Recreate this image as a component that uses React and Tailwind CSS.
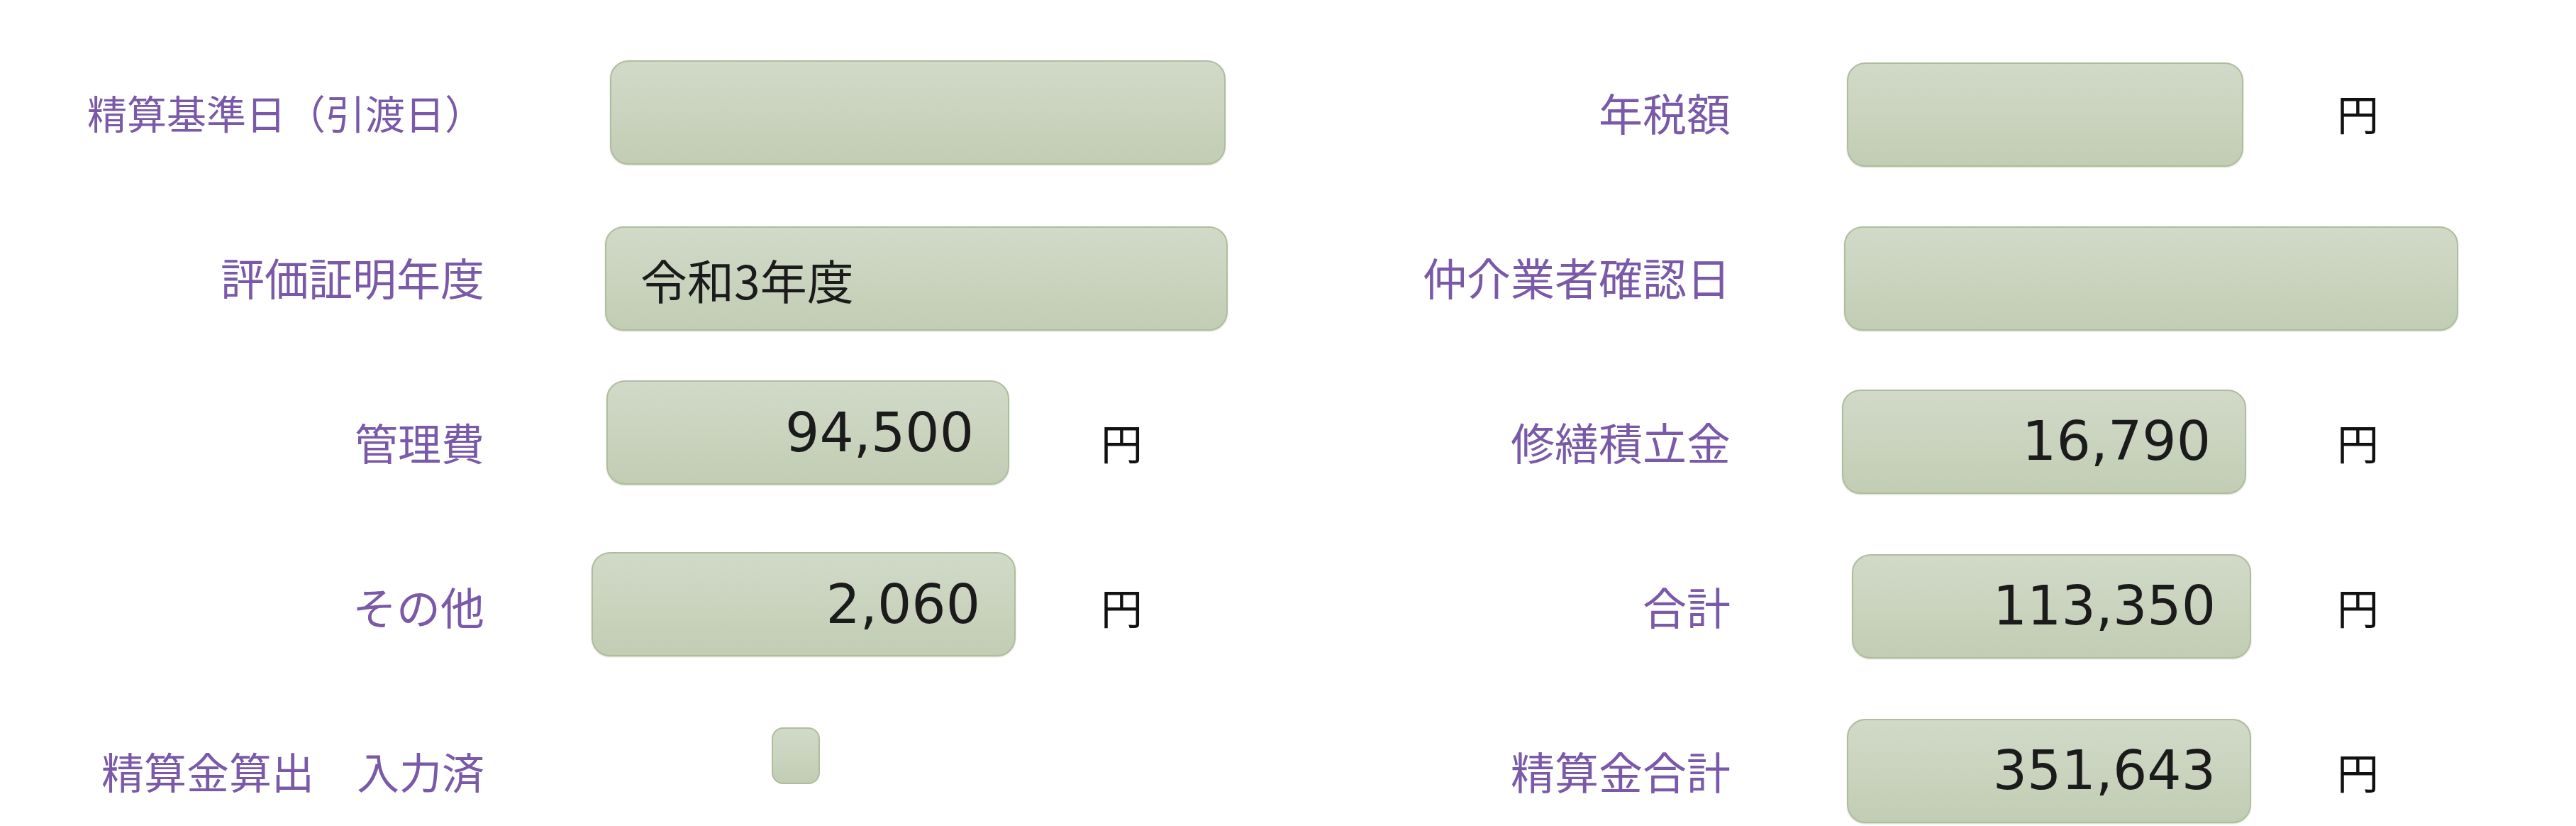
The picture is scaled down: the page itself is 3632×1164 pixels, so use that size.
import React from 'react';

const LABEL_FONT = { fontFamily: '"Noto Sans CJK JP", "Noto Sans", sans-serif' };

// ─── 入力欄 ──────
const Field = ({ value = '', align = 'right', className = '' }) => (
  <div
    className={`h-[147px] shrink-0 flex items-center rounded-[26px] border-2 border-[#aebd9f] bg-gradient-to-b from-[#d1dac8] to-[#c2cdb4] shadow-[0_1px_2px_rgba(120,140,100,0.35)] ${
      align === 'right' ? 'justify-end pr-[48px]' : 'justify-start pl-[48px]'
    } ${className}`}
  >
    {align === 'right' ? (
      <span className="text-[76px] leading-none text-[#1b1b1b]" style={{ fontFamily: '"DejaVu Sans", sans-serif' }}>
        {value}
      </span>
    ) : (
      <span className="text-[66px] leading-none text-[#1b1b1b]" style={LABEL_FONT}>
        {value}
      </span>
    )}
  </div>
);

const Label = ({ children, className = '' }) => (
  <div
    className={`shrink-0 text-right leading-none text-[#7a5aa8] whitespace-pre ${className}`}
    style={LABEL_FONT}
  >
    {children}
  </div>
);

const Yen = ({ className = '' }) => (
  <span className={`shrink-0 text-[59px] leading-none text-[#111] ${className}`} style={LABEL_FONT}>円</span>
);

const Row = ({ children }) => <div className="h-[232px] shrink-0 flex items-center">{children}</div>;

export default function App() {
  return (
    <div className="w-[3632px] h-[1164px] overflow-hidden bg-white flex items-start pt-[42px]">
      {/* ── 左列 ── */}
      <div className="w-[1816px] shrink-0 flex flex-col">
        <Row>
          <Label className="w-[683px] text-[56px]">精算基準日（引渡日）</Label>
          <Field className="ml-[177px] w-[868px]" />
        </Row>
        <Row>
          <Label className="w-[683px] text-[62px]">評価証明年度</Label>
          <Field className="ml-[170px] w-[878px] mt-[5px]" align="left" value="令和3年度" />
        </Row>
        <Row>
          <Label className="w-[683px] text-[61px]">管理費</Label>
          <Field className="ml-[172px] w-[568px] mb-[25px]" value="94,500" />
          <Yen className="ml-[129px]" />
        </Row>
        <Row>
          <Label className="w-[683px] text-[62px]">その他</Label>
          <Field className="ml-[151px] w-[598px] mb-[5px]" value="2,060" />
          <Yen className="ml-[120px]" />
        </Row>
        <Row>
          <Label className="w-[683px] text-[60px]">精算金算出　入力済</Label>
          <div className="ml-[405px] mb-[42px] w-[68px] h-[80px] shrink-0 rounded-[16px] border-2 border-[#aebd9f] bg-gradient-to-b from-[#d1dac8] to-[#c2cdb4]" />
        </Row>
      </div>

      {/* ── 右列 ── */}
      <div className="flex-1 flex flex-col">
        <Row>
          <Label className="w-[624px] text-[62px]">年税額</Label>
          <Field className="ml-[164px] w-[559px] mt-[6px]" />
          <Yen className="ml-[132px]" />
        </Row>
        <Row>
          <Label className="w-[624px] text-[62px]">仲介業者確認日</Label>
          <Field className="ml-[160px] w-[866px] mt-[5px]" />
        </Row>
        <Row>
          <Label className="w-[624px] text-[62px]">修繕積立金</Label>
          <Field className="ml-[157px] w-[570px]" value="16,790" />
          <Yen className="ml-[128px]" />
        </Row>
        <Row>
          <Label className="w-[624px] text-[62px]">合計</Label>
          <Field className="ml-[171px] w-[563px]" value="113,350" />
          <Yen className="ml-[121px]" />
        </Row>
        <Row>
          <Label className="w-[624px] text-[62px]">精算金合計</Label>
          <Field className="ml-[164px] w-[570px]" value="351,643" />
          <Yen className="ml-[121px]" />
        </Row>
      </div>
    </div>
  );
}
